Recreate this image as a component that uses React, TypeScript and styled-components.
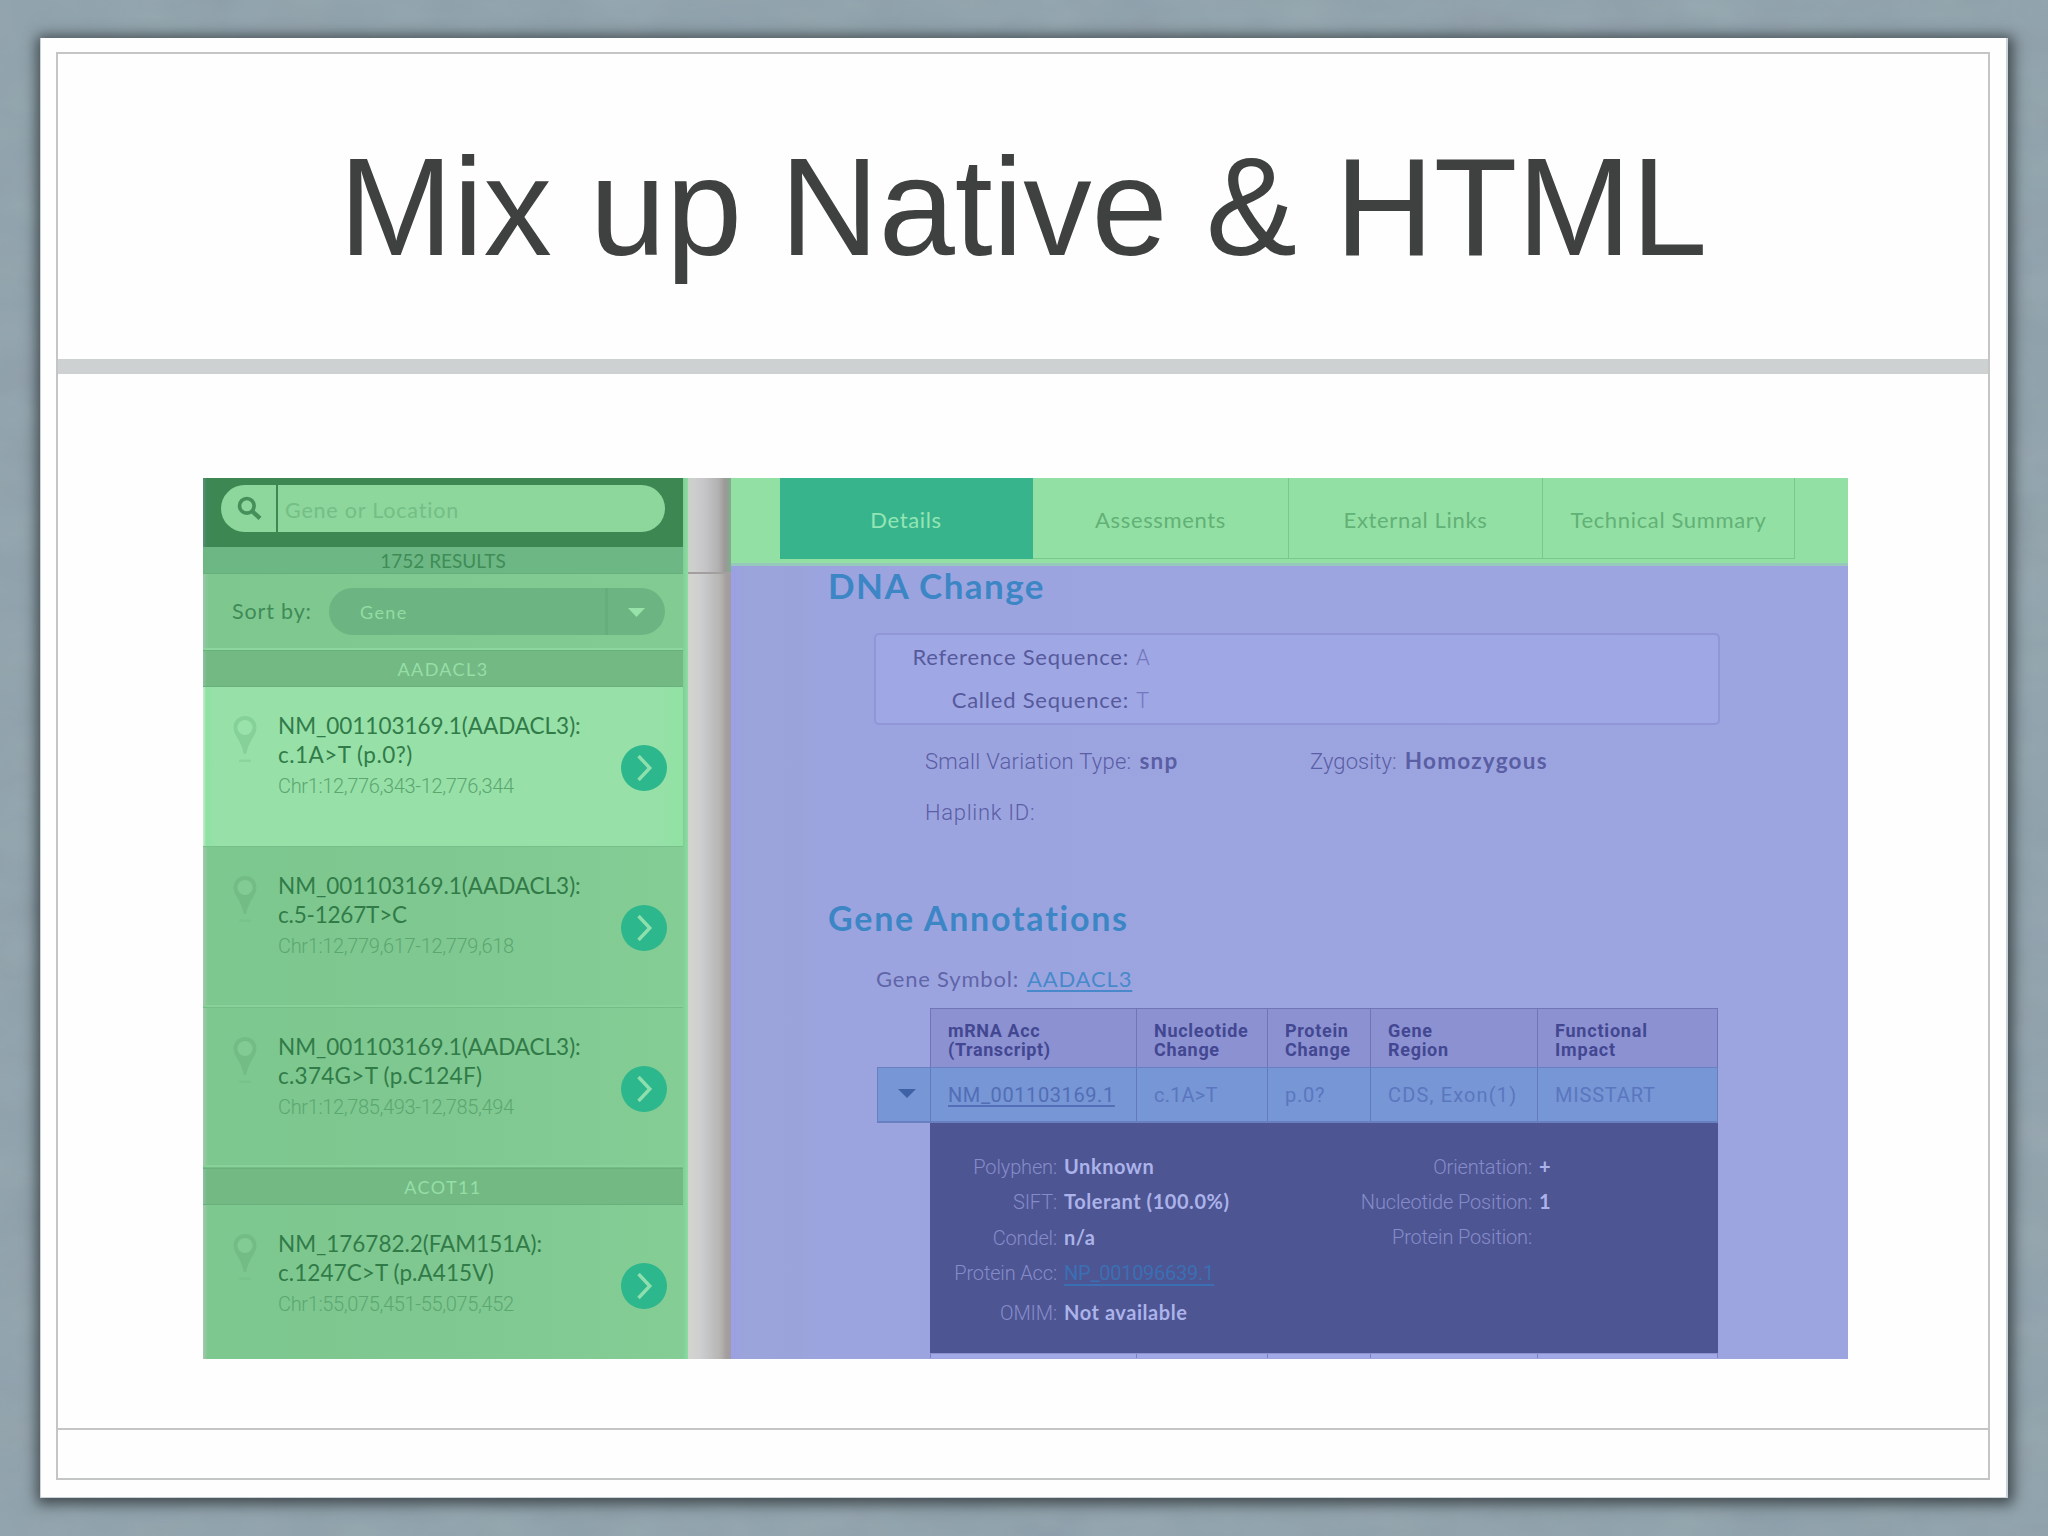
import React from 'react';
import styled, { createGlobalStyle } from 'styled-components';

const humanist = `Lato, 'Open Sans', sans-serif`;
const technical = `Roboto, 'Noto Sans', sans-serif`;

const GlobalStyle = createGlobalStyle`
  *, *::before, *::after { box-sizing: border-box; }
  html, body { margin: 0; padding: 0; }
  body { width: 2048px; height: 1536px; overflow: hidden; }
  h1, h2, p, dl, dt, dd { margin: 0; font-weight: inherit; }
`;

/* ---------- slide ---------- */

const Backdrop = styled.div`
  position: relative;
  width: 2048px;
  height: 1536px;
  padding: 38px 40px;
  background: #8fa2ac;
  overflow: hidden;
`;

const Texture = styled.svg`
  position: absolute;
  inset: 0;
  opacity: 0.13;
`;

const Slide = styled.section`
  position: relative;
  width: 1968px;
  height: 1460px;
  padding: 14px 18px 18px 15px;
  background: #fefefe;
  border: solid #c9d3d9;
  border-width: 0 2px 1px 1px;
  box-shadow: 1px 2px 13px 4px rgba(58, 66, 70, 0.95);
`;

const Frame = styled.div`
  display: flex;
  flex-direction: column;
  width: 1934px;
  height: 1428px;
  border: 2px solid #c4c6c5;
`;

const TitleArea = styled.header`
  display: flex;
  align-items: center;
  justify-content: center;
  height: 305px;
`;

const Title = styled.h1`
  font: 400 139px/160px 'Liberation Sans', Arial, sans-serif;
  color: #3f4141;
  white-space: nowrap;
  transform: scaleX(0.984);
`;

const Band = styled.div`
  height: 15px;
  background: #cdd1d2;
`;

const SlideBody = styled.main`
  flex: 1;
  padding: 104px 0 0 145px;
`;

const SlideFooter = styled.footer`
  height: 50px;
  border-top: 2px solid #c4c6c5;
`;

/* ---------- application capture ---------- */

const Capture = styled.div`
  display: flex;
  width: 1645px;
  height: 881px;
  overflow: hidden;
`;

const Sidebar = styled.aside`
  flex: none;
  width: 485px;
  padding-right: 5px;
  overflow: hidden;
  background: linear-gradient(90deg, #7fcf95 480px, #7ed096 480px, #8edba3 485px);
`;

const SearchBar = styled.div`
  height: 69px;
  padding: 7px 18px 0;
  background: linear-gradient(90deg, #5b8d79 0, #3d8757 4px, #3d8753 12px);
`;

const SearchField = styled.div`
  display: flex;
  width: 444px;
  height: 47px;
  border-radius: 24px;
  background: #8dd69c;
  overflow: hidden;
`;

const SearchButton = styled.div`
  display: flex;
  align-items: center;
  width: 57px;
  padding-left: 16px;
  border-right: 2px solid #3d8853;
`;

const Placeholder = styled.span`
  padding: 2px 0 0 7px;
  font: 400 21.5px/47px ${humanist};
  letter-spacing: 0.8px;
  color: #73bf85;
`;

const ResultCount = styled.div`
  height: 27px;
  background: #6cb783;
  border-bottom: 1px solid #66b07d;
  color: #3f8c57;
  font: 400 19px/27px ${humanist};
  text-align: center;
`;

const SortBar = styled.div`
  display: flex;
  align-items: center;
  height: 76px;
  padding-left: 29px;
  background: linear-gradient(90deg, #9bc7aa 0, #7ec88f 5px, #82cc94);
  border-bottom: 2px solid #8dd79e;
`;

const SortLabel = styled.span`
  width: 97px;
  font: 400 21.5px/30px ${humanist};
  letter-spacing: 0.85px;
  color: #3f8b57;
`;

const SortSelect = styled.div`
  display: flex;
  width: 336px;
  height: 47px;
  border-radius: 24px;
  background: #6cb582;
  overflow: hidden;
`;

const SortValue = styled.span`
  flex: 1;
  padding-left: 31px;
  font: 400 18px/49px ${humanist};
  letter-spacing: 1.4px;
  color: #92dda3;
`;

const SortToggle = styled.span`
  display: flex;
  align-items: center;
  width: 60px;
  padding: 2px 0 0 20px;
  border-left: 3px solid #66ae7c;
`;

const GroupHeader = styled.div`
  height: 37px;
  background: linear-gradient(90deg, #8fc0a0 0, #73b984 4px);
  border: solid #6ab07c;
  border-width: 1px 0;
  color: #95dfa6;
  font: 400 18px/37px ${humanist};
  letter-spacing: 1.4px;
  text-align: center;
`;

const VariantRow = styled.div<{ $height: number; $active?: boolean }>`
  display: flex;
  align-items: flex-start;
  height: ${({ $height }) => $height}px;
  padding-left: 30px;
  background: ${({ $active }) =>
    $active
      ? 'linear-gradient(90deg, #d2ead6 0, #8de2a2 3px, #97e0a8 12px, #97e0a8 94%, #90e2a3)'
      : 'linear-gradient(90deg, #a5c7ae 0, #7cc88f 5px, #80c891 50%, #84cd95)'};
  border-bottom: 1px solid ${({ $active }) => ($active ? '#78c08a' : '#74bd86')};
  box-shadow: inset 0 -2px 0 ${({ $active }) => ($active ? 'transparent' : '#88d199')};
`;

const PinSlot = styled.span`
  width: 45px;
  padding-top: 29px;
`;

const VariantText = styled.div`
  width: 343px;
  padding-top: 24px;
`;

const VariantName = styled.p<{ $tracking: number }>`
  font: 400 22.5px/29px ${humanist};
  letter-spacing: ${({ $tracking }) => $tracking}px;
  color: #317b48;
  white-space: nowrap;
`;

const VariantLocus = styled.p`
  margin-top: 5px;
  font: 300 20px/24px ${technical};
  letter-spacing: -0.34px;
  color: #5ba770;
`;

const OpenButton = styled.span`
  display: flex;
  align-items: center;
  justify-content: center;
  width: 46px;
  height: 46px;
  margin-top: 58px;
  border-radius: 50%;
  background: #2cb78d;
`;

const Gutter = styled.div`
  flex: none;
  display: flex;
  flex-direction: column;
  width: 43px;
  background: linear-gradient(90deg, #cfd6cc 0, #d3d2d0 5px, #cecfd0 12px, #c2c2c3 22px, #b6b5b4 32px, #a5a09b 38px, #a09aa8 43px);
`;

const GutterTop = styled.div`
  height: 96px;
  border-bottom: 2px solid #a39f9f;
  background: linear-gradient(90deg, #c9d3c6 0, #cfcecf 6px, #c4c3c5 18px, #b3b2b2 30px, #9c9898 37px, #7fae8c 43px);
`;

const DetailPane = styled.div`
  flex: none;
  width: 1117px;
  background: linear-gradient(90deg, #9ba0e2 0, #9ba4db 14px, #9ba4da 70px, #9ca4e0 90px, #9da5e1);
`;

const TabStrip = styled.nav`
  display: flex;
  height: 88px;
  padding-left: 49px;
  background: #93e0a4;
  border-bottom: 3px solid #96c8bb;
`;

const Tab = styled.span<{ $width: number; $selected?: boolean }>`
  width: ${({ $width }) => $width}px;
  height: 81px;
  padding-top: 2px;
  background: ${({ $selected }) => ($selected ? '#38b48d' : 'transparent')};
  border: solid ${({ $selected }) => ($selected ? '#38b48d' : '#79c98b')};
  border-width: 0 1px 1px 0;
  color: ${({ $selected }) => ($selected ? '#93e6b4' : '#62b176')};
  font: 400 22px/79px ${humanist};
  letter-spacing: 0.65px;
  text-align: center;
`;

const SectionTitle = styled.h2<{ $size: number; $line: number; $top?: number; $tracking: number }>`
  margin: ${({ $top = 0 }) => $top}px 0 0 97px;
  font: 700 ${({ $size }) => $size}px/${({ $line }) => $line}px ${humanist};
  letter-spacing: ${({ $tracking }) => $tracking}px;
  color: #3c86c6;
`;

const SequenceBox = styled.dl`
  width: 846px;
  height: 92px;
  margin: 28px 0 0 143px;
  border: 2px solid #9196d6;
  border-radius: 5px;
  background: #9fa7e4;
`;

const SequenceRow = styled.div`
  display: grid;
  grid-template-columns: 253px auto;
  column-gap: 7px;
  height: 43px;
  font: 400 22px/43px ${humanist};
  color: #565a9d;

  dt { text-align: right; letter-spacing: 0.77px; }
  dd { color: #7377bd; font-family: ${technical}; font-weight: 300; font-size: 22px; padding-top: 1px; }
`;

const Facts = styled.dl`
  display: grid;
  grid-template-columns: 385px 400px;
  grid-auto-rows: 51.5px;
  margin: 10px 0 0 194px;
`;

const Fact = styled.div<{ $spacing: number }>`
  display: flex;
  align-items: baseline;
  gap: 8px;
  line-height: 51px;
  font-size: 22px;
  color: #5a5ea4;

  dt { font-family: ${technical}; font-weight: 300; letter-spacing: ${({ $spacing }) => $spacing}px; }
  dd { font-family: ${humanist}; font-weight: 700; font-size: 22.5px; letter-spacing: 1.25px; }
`;

const GeneSymbol = styled.p`
  display: flex;
  gap: 8px;
  margin: 24px 0 0 145px;
  font: 400 22px/34px ${humanist};
  letter-spacing: 0.8px;
  color: #6065a8;
`;

const GeneLink = styled.a`
  color: #4789cb;
  text-decoration: underline;
  text-decoration-thickness: 1.5px;
  text-underline-offset: 3px;
  text-decoration-skip-ink: none;
  letter-spacing: 0.85px;
`;

const TranscriptTable = styled.div`
  width: 841px;
  margin: 12px 0 0 146px;
`;

const HeaderRow = styled.div`
  display: flex;
  height: 59px;
  width: 788px;
  margin-left: 53px;
  background: #8b91d1;
  border: solid #7075b8;
  border-width: 1.5px 1.5px 0 0;
`;

const DataRow = styled.div`
  display: flex;
  height: 56px;
  background: #7696d5;
  border: solid #6a7fc0;
  border-width: 1.5px 1.5px 2px 0;
`;

const HeaderCell = styled.span<{ $width: number; $spacing: number }>`
  width: ${({ $width }) => $width}px;
  padding: 12px 0 0 17px;
  border-left: 1px solid #7075b8;
  font: 700 18px/19px ${technical};
  letter-spacing: ${({ $spacing }) => $spacing}px;
  color: #434791;
  white-space: pre-line;
`;

const DataCell = styled.span<{ $width: number; $spacing: number }>`
  width: ${({ $width }) => $width}px;
  padding-left: 17px;
  border-left: 1px solid #6379bd;
  font: 400 20px/54px ${technical};
  letter-spacing: ${({ $spacing }) => $spacing}px;
  color: #5b76bf;
`;

const TranscriptLink = styled.a`
  color: #536db6;
  text-decoration: underline;
  text-decoration-thickness: 1.5px;
  text-underline-offset: 3px;
  text-decoration-skip-ink: none;
`;

const ExpandCell = styled.span`
  display: flex;
  align-items: center;
  width: 53px;
  padding: 0 0 2px 20px;
  border-left: 1px solid #6a7fc0;
`;

const Expansion = styled.div`
  display: grid;
  grid-template-columns: 400px auto;
  align-items: start;
  width: 788px;
  height: 230px;
  margin-left: 53px;
  padding-top: 26px;
  background: #4e5593;
`;

const PropertyList = styled.dl<{ $label: number }>`
  display: grid;
  grid-template-columns: ${({ $label }) => $label}px auto;
  column-gap: 7px;
  align-items: baseline;
  font-size: 20px;
  line-height: 34.3px;

  dt { font-family: ${technical}; font-weight: 300; letter-spacing: -0.15px; text-align: right; color: #858cca; }
  dd { font-family: ${humanist}; font-weight: 700; letter-spacing: 0.55px; color: #abb3ea; }
  dt:nth-of-type(5), dd:nth-of-type(5) { padding-top: 5px; }
`;

const ProteinLink = styled.a`
  font-family: ${technical};
  font-weight: 400;
  letter-spacing: -0.25px;
  color: #3b6fb4;
  text-decoration: underline;
  text-decoration-thickness: 1.5px;
  text-underline-offset: 4px;
  text-decoration-skip-ink: none;
`;

const NextRow = styled.div`
  display: flex;
  width: 788px;
  height: 5px;
  margin-left: 53px;
  border-right: 1.5px solid #7c81c4;
  border-top: 1px solid #8b90ce;
  background: #a2a9e6;
`;

const NextCell = styled.span<{ $width: number }>`
  width: ${({ $width }) => $width}px;
  border-left: 1px solid #7c81c4;
`;

/* ---------- drawings ---------- */

const SearchIcon = () => (
  <svg width="25" height="25" viewBox="0 0 25 25" fill="none" stroke="#458f5b">
    <circle cx="9.8" cy="9.8" r="7.3" strokeWidth="3.6" />
    <path d="M15.4 15.4 L23 22.4" strokeWidth="4.4" />
  </svg>
);

const PinIcon = ({ active }: { active?: boolean }) => (
  <svg width="24" height="47" viewBox="0 0 24 47">
    <path
      d="M12 0C5.200 0 .6 5 .6 11.600c0 8.400 7.600 12.400 10.200 26.400h2.400C15.800 24 23.400 20 23.400 11.600 23.400 5 18.800 0 12 0Z"
      fill={active ? '#86d099' : '#73bc86'}
    />
    <circle cx="12" cy="11.500" r="7.600" fill={active ? '#99e2aa' : '#82cb94'} />
    <rect x="6" y="43.500" width="12" height="2.500" rx="1.200" fill={active ? '#8bd49d' : '#79c28b'} />
  </svg>
);

const ChevronIcon = () => (
  <svg width="18" height="30" viewBox="0 0 18 30" fill="none" stroke="#8fdfae" strokeWidth="3.400">
    <path d="M3.500 3 L14.800 15 L3.500 27" />
  </svg>
);

const Triangle = ({ fill, width, height }: { fill: string; width: number; height: number }) => (
  <svg width={width} height={height} viewBox="0 0 18 10" preserveAspectRatio="none">
    <path d="M0 0H18L9 10Z" fill={fill} />
  </svg>
);

/* ---------- data ---------- */

type Variant = { transcript: string; change: string; tracking: number; locus: string; height: number; active?: boolean };
const groups: { gene: string; variants: Variant[] }[] = [
  {
    gene: 'AADACL3',
    variants: [
      { transcript: 'NM_001103169.1(AADACL3):', change: 'c.1A>T (p.0?)', tracking: 0.47, locus: 'Chr1:12,776,343-12,776,344', height: 160, active: true },
      { transcript: 'NM_001103169.1(AADACL3):', change: 'c.5-1267T>C', tracking: -0.2, locus: 'Chr1:12,779,617-12,779,618', height: 161 },
      { transcript: 'NM_001103169.1(AADACL3):', change: 'c.374G>T (p.C124F)', tracking: 0.28, locus: 'Chr1:12,785,493-12,785,494', height: 160 },
    ],
  },
  {
    gene: 'ACOT11',
    variants: [
      { transcript: 'NM_176782.2(FAM151A):', change: 'c.1247C>T (p.A415V)', tracking: 0.08, locus: 'Chr1:55,075,451-55,075,452', height: 160 },
    ],
  },
];

const tabs = [
  { label: 'Details', width: 253, selected: true },
  { label: 'Assessments', width: 256 },
  { label: 'External Links', width: 254 },
  { label: 'Technical Summary', width: 252 },
];

const columns = [
  { head: 'mRNA Acc\n(Transcript)', value: 'NM_001103169.1', width: 206, headSpacing: 0.6, spacing: 0.6, link: true },
  { head: 'Nucleotide\nChange', value: 'c.1A>T', width: 131, headSpacing: 0.7, spacing: 0.2 },
  { head: 'Protein\nChange', value: 'p.0?', width: 103, headSpacing: 0.7, spacing: 0.75 },
  { head: 'Gene\nRegion', value: 'CDS, Exon(1)', width: 167, headSpacing: 0.7, spacing: 1.15 },
  { head: 'Functional\nImpact', value: 'MISSTART', width: 179, headSpacing: 0.8, spacing: 0.8 },
];

export default function App() {
  return (
    <>
      <GlobalStyle />
      <Backdrop>
        <Texture width="2048" height="1536">
          <filter id="paper">
            <feTurbulence type="fractalNoise" baseFrequency="0.012 0.02" numOctaves="4" seed="4" />
            <feColorMatrix type="saturate" values="0.3" />
          </filter>
          <rect width="2048" height="1536" filter="url(#paper)" />
        </Texture>
        <Slide>
          <Frame>
            <TitleArea>
              <Title>Mix up Native &amp; HTML</Title>
            </TitleArea>
            <Band />
            <SlideBody>
              <Capture>
                <Sidebar>
                  <SearchBar>
                    <SearchField>
                      <SearchButton><SearchIcon /></SearchButton>
                      <Placeholder>Gene or Location</Placeholder>
                    </SearchField>
                  </SearchBar>
                  <ResultCount>1752 RESULTS</ResultCount>
                  <SortBar>
                    <SortLabel>Sort by:</SortLabel>
                    <SortSelect>
                      <SortValue>Gene</SortValue>
                      <SortToggle><Triangle fill="#97e2a9" width={17} height={9} /></SortToggle>
                    </SortSelect>
                  </SortBar>
                  {groups.map((group) => (
                    <React.Fragment key={group.gene}>
                      <GroupHeader>{group.gene}</GroupHeader>
                      {group.variants.map((v) => (
                        <VariantRow key={v.locus} $height={v.height} $active={v.active}>
                          <PinSlot><PinIcon active={v.active} /></PinSlot>
                          <VariantText>
                            <VariantName $tracking={-0.03}>{v.transcript}</VariantName>
                            <VariantName $tracking={v.tracking}>{v.change}</VariantName>
                            <VariantLocus>{v.locus}</VariantLocus>
                          </VariantText>
                          <OpenButton><ChevronIcon /></OpenButton>
                        </VariantRow>
                      ))}
                    </React.Fragment>
                  ))}
                </Sidebar>
                <Gutter><GutterTop /></Gutter>
                <DetailPane>
                  <TabStrip>
                    {tabs.map((t) => (
                      <Tab key={t.label} $width={t.width} $selected={t.selected}>{t.label}</Tab>
                    ))}
                  </TabStrip>
                  <SectionTitle $size={35} $line={39} $tracking={1.45}>DNA Change</SectionTitle>
                  <SequenceBox>
                    <SequenceRow><dt>Reference Sequence:</dt><dd>A</dd></SequenceRow>
                    <SequenceRow><dt>Called Sequence:</dt><dd>T</dd></SequenceRow>
                  </SequenceBox>
                  <Facts>
                    <Fact $spacing={0.26}><dt>Small Variation Type:</dt><dd>snp</dd></Fact>
                    <Fact $spacing={0.08}><dt>Zygosity:</dt><dd>Homozygous</dd></Fact>
                    <Fact $spacing={0.7}><dt>Haplink ID:</dt></Fact>
                  </Facts>
                  <SectionTitle $size={34} $line={40} $top={60} $tracking={1.75}>Gene Annotations</SectionTitle>
                  <GeneSymbol>Gene Symbol: <GeneLink>AADACL3</GeneLink></GeneSymbol>
                  <TranscriptTable>
                    <HeaderRow>
                      {columns.map((c) => (
                        <HeaderCell key={c.head} $width={c.width} $spacing={c.headSpacing}>{c.head}</HeaderCell>
                      ))}
                    </HeaderRow>
                    <DataRow>
                      <ExpandCell><Triangle fill="#3f61a6" width={18} height={9} /></ExpandCell>
                      {columns.map((c) => (
                        <DataCell key={c.value} $width={c.width} $spacing={c.spacing}>
                          {c.link ? <TranscriptLink>{c.value}</TranscriptLink> : c.value}
                        </DataCell>
                      ))}
                    </DataRow>
                    <Expansion>
                      <PropertyList $label={127}>
                        <dt>Polyphen:</dt><dd>Unknown</dd>
                        <dt>SIFT:</dt><dd>Tolerant (100.0%)</dd>
                        <dt>Condel:</dt><dd>n/a</dd>
                        <dt>Protein Acc:</dt><dd><ProteinLink>NP_001096639.1</ProteinLink></dd>
                        <dt>OMIM:</dt><dd>Not available</dd>
                      </PropertyList>
                      <PropertyList $label={202}>
                        <dt>Orientation:</dt><dd>+</dd>
                        <dt>Nucleotide Position:</dt><dd>1</dd>
                        <dt>Protein Position:</dt><dd />
                      </PropertyList>
                    </Expansion>
                    <NextRow>
                      {columns.map((c) => <NextCell key={c.head} $width={c.width} />)}
                    </NextRow>
                  </TranscriptTable>
                </DetailPane>
              </Capture>
            </SlideBody>
            <SlideFooter />
          </Frame>
        </Slide>
      </Backdrop>
    </>
  );
}
